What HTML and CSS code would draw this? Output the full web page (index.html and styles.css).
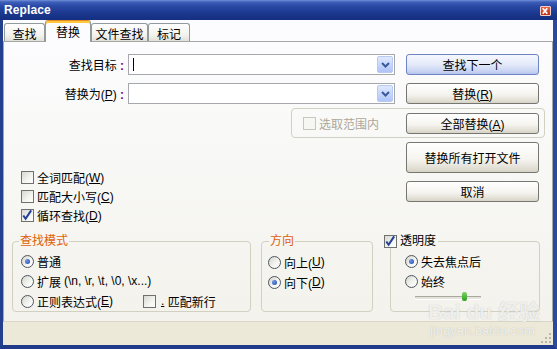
FILE: index.html
```html
<!DOCTYPE html>
<html lang="zh-CN">

<head>
    <meta charset="UTF-8">
    <title>Replace</title>
    <link rel="stylesheet" href="styles.css">
</head>

<body>

    <div class="window">
        <!-- Title bar -->
        <div class="titlebar">
            <span class="title">Replace</span>
            <span class="close-btn">
                <svg width="11" height="10" viewBox="0 0 11 10">
                    <path d="M3 2 L8 8 M8 2 L3 8" stroke="#fff" stroke-width="2" />
                </svg>
            </span>
        </div>

        <div class="frame">
            <!-- Tabs -->
            <div class="tabs">
                <div class="tab tab-find">查找</div>
                <div class="tab tab-replace active">替换</div>
                <div class="tab tab-files">文件查找</div>
                <div class="tab tab-mark">标记</div>
            </div>

            <div class="panel">
                <div class="field-row first">
                    <label class="field-label">查找目标 <span class="colon">:</span></label>
                    <div class="combo">
                        <span class="caret"></span>
                        <span class="combo-btn">
                            <svg width="9" height="6" viewBox="0 0 9 6">
                                <path d="M1 1 L4.5 4.5 L8 1" fill="none" stroke="#3b5a9a" stroke-width="2" />
                            </svg>
                        </span>
                    </div>
                    <button class="btn default">查找下一个</button>
                </div>

                <div class="field-row">
                    <label class="field-label">替换为(<u>P</u>) <span class="colon">:</span></label>
                    <div class="combo">
                        <span class="combo-btn">
                            <svg width="9" height="6" viewBox="0 0 9 6">
                                <path d="M1 1 L4.5 4.5 L8 1" fill="none" stroke="#3b5a9a" stroke-width="2" />
                            </svg>
                        </span>
                    </div>
                    <button class="btn">替换(<u>R</u>)</button>
                </div>

                <div class="selection-group">
                    <span class="option disabled"><span class="check"></span>选取范围内</span>
                    <button class="btn">全部替换(<u>A</u>)</button>
                </div>

                <div class="middle-row">
                    <div class="options">
                        <div class="option"><span class="check"></span>全词匹配(<u>W</u>)</div>
                        <div class="option"><span class="check"></span>匹配大小写(<u>C</u>)</div>
                        <div class="option"><span class="check checked">
                                <svg width="13" height="13" viewBox="0 0 13 13">
                                    <path d="M2.5 6.5 L5 10 L11 1" fill="none" stroke="#21409a" stroke-width="2.2" />
                                </svg>
                            </span>循环查找(<u>D</u>)</div>
                    </div>
                    <div class="actions">
                        <button class="btn tall">替换所有打开文件</button>
                        <button class="btn">取消</button>
                    </div>
                </div>

                <div class="groups">
                    <fieldset class="group group-mode">
                        <legend>查找模式</legend>
                        <div class="option"><span class="radio checked"></span>普通</div>
                        <div class="option"><span class="radio"></span>扩展 <span class="hint">(\n, \r, \t, \0, \x...)</span></div>
                        <div class="option">
                            <span class="regex"><span class="radio"></span>正则表达式(<u>E</u>)</span>
                            <span class="check"></span><u class="dot">.</u>&nbsp;匹配新行
                        </div>
                    </fieldset>

                    <fieldset class="group group-dir">
                        <legend>方向</legend>
                        <div class="option"><span class="radio"></span>向上(<u>U</u>)</div>
                        <div class="option"><span class="radio checked"></span>向下(<u>D</u>)</div>
                    </fieldset>

                    <fieldset class="group group-alpha">
                        <legend><span class="check checked">
                                <svg width="13" height="13" viewBox="0 0 13 13">
                                    <path d="M2.5 6.5 L5 10 L11 1" fill="none" stroke="#21409a" stroke-width="2.2" />
                                </svg>
                            </span>透明度</legend>
                        <div class="alpha-body">
                            <div class="option"><span class="radio checked"></span>失去焦点后</div>
                            <div class="option"><span class="radio"></span>始终</div>
                            <div class="slider">
                                <span class="thumb"></span>
                            </div>
                        </div>
                    </fieldset>
                </div>
            </div>

            <!-- Status bar with resize grip -->
            <div class="statusbar">
                <svg class="grip" width="10" height="10" viewBox="0 0 10 10">
                    <g fill="#b9b6a6">
                        <rect x="8" y="0" width="2" height="2" />
                        <rect x="4" y="4" width="2" height="2" />
                        <rect x="8" y="4" width="2" height="2" />
                        <rect x="0" y="8" width="2" height="2" />
                        <rect x="4" y="8" width="2" height="2" />
                        <rect x="8" y="8" width="2" height="2" />
                    </g>
                </svg>
            </div>
        </div>

        <div class="watermark">
            <span class="wm-logo">Bai du 经验</span>
            <span class="wm-url">jingyan.baidu.com</span>
        </div>
    </div>

</body>

</html>
```

FILE: styles.css
```css
/* Global Styles */
body {
    margin: 0;
    padding: 0;
    font-family: "Liberation Sans", "Noto Sans CJK SC", sans-serif;
    font-size: 12px;
    color: #000;
}

.window {
    position: relative;
    width: 557px;
    height: 349px;
    display: flex;
    flex-direction: column;
    background-color: #fcfcfe;
    overflow: hidden;
}

/* Title bar */
.titlebar {
    height: 20px;
    flex: none;
    display: flex;
    justify-content: space-between;
    align-items: center;
    padding: 0 6px 0 4px;
    background: linear-gradient(to bottom, #7290d8 0, #3f60ba 2px, #2a4aa5 6px, #1b388f 13px, #142f80 100%);
}

.title {
    color: white;
    font-weight: bold;
    font-size: 12px;
    letter-spacing: 0.1px;
}

.close-btn {
    display: flex;
    width: 11px;
    height: 10px;
    margin-top: 2px;
    background: linear-gradient(to bottom, #e8604a, #c42a14);
    border: 1px solid #f3d0c8;
    box-sizing: border-box;
    border-radius: 1px;
}

.close-btn svg {
    margin: -1px 0 0 -1px;
}

.frame {
    flex: 1;
    display: flex;
    flex-direction: column;
    border-left: 3px solid #22408e;
    border-right: 4px solid #2a4a9e;
    border-bottom: 4px solid #1f3b8a;
}

/* Tabs */
.tabs {
    height: 21px;
    flex: none;
    display: flex;
    align-items: flex-end;
    padding-left: 1px;
}

.tab {
    box-sizing: border-box;
    height: 18px;
    display: flex;
    justify-content: center;
    align-items: center;
    padding-top: 2px;
    border: 1px solid #919b9c;
    border-bottom: none;
    border-radius: 3px 3px 0 0;
    background: linear-gradient(to bottom, #ffffff, #f3f2ed 65%, #e2e0d6);
}

.tab-find { width: 41px; }
.tab-replace { width: 46px; }
.tab-files { width: 57px; }
.tab-mark { width: 42px; }

.tab.active {
    position: relative;
    z-index: 1;
    height: 22px;
    margin-bottom: -1px;
    padding-top: 0;
    background: #fcfcfe;
    border-top: 1px solid #e68b2c;
    box-shadow: inset 0 2px #ffc83c;
}

/* Tab panel */
.panel {
    flex: 1;
    border: 1px solid #a3a7a6;
    border-bottom-color: #d9d6c8;
    background: linear-gradient(to bottom, #fcfcfe, #f8f8f6 40%, #f3f2ec);
}

.field-row {
    display: flex;
    align-items: center;
    height: 21px;
    margin-top: 8px;
}

.field-row.first {
    margin-top: 12px;
}

.field-label {
    box-sizing: border-box;
    width: 124px;
    padding-right: 4px;
    text-align: right;
}

.colon {
    color: #800080;
    font-weight: bold;
}

.combo {
    box-sizing: border-box;
    width: 267px;
    height: 21px;
    display: flex;
    align-items: center;
    justify-content: space-between;
    background: white;
    border: 1px solid #a5a9ad;
    padding: 0 1px 0 4px;
}

.caret {
    width: 1px;
    height: 13px;
    background: black;
}

.combo-btn {
    box-sizing: border-box;
    width: 16px;
    height: 17px;
    margin-left: auto;
    display: flex;
    align-items: center;
    justify-content: center;
    border: 1px solid #b8c9f5;
    border-radius: 2px;
    background: linear-gradient(to bottom, #e0e9fd, #c3d4fb 60%, #afc5f6);
}

/* Buttons */
.btn {
    box-sizing: border-box;
    width: 133px;
    height: 21px;
    padding: 0;
    margin-left: 11px;
    font-family: inherit;
    font-size: 12px;
    color: black;
    border: 1px solid #777771;
    border-radius: 3px;
    background: linear-gradient(to bottom, #ffffff, #f5f4ef 55%, #e3e0d6 85%, #d6d2c5);
}

.btn.default {
    border-color: #6f84c2;
    background: linear-gradient(to bottom, #f6f8fe, #e4eaf9 50%, #c9d4f3 85%, #b5c4ee);
}

.btn.tall {
    height: 31px;
}

u {
    text-decoration: underline;
    text-underline-offset: 1px;
}

/* Checkboxes and radios */
.option {
    display: flex;
    align-items: center;
    height: 19px;
    white-space: nowrap;
}

.check {
    box-sizing: border-box;
    flex: none;
    width: 13px;
    height: 13px;
    margin-right: 3px;
    border: 1px solid #6f716f;
    background: linear-gradient(135deg, #d8d8d2, #f4f4f0 60%, #ffffff);
    display: inline-flex;
}

.check svg {
    margin: -1px 0 0 -1px;
}

.radio {
    box-sizing: border-box;
    flex: none;
    width: 13px;
    height: 13px;
    margin-right: 3px;
    border: 1px solid #4e5660;
    border-radius: 50%;
    background: linear-gradient(135deg, #d5d5cf, #f5f5f2 60%, #ffffff);
    display: inline-flex;
    align-items: center;
    justify-content: center;
}

.radio.checked::after {
    content: "";
    width: 5px;
    height: 5px;
    border-radius: 50%;
    background: radial-gradient(circle at 35% 35%, #6d95e8, #2348a8);
}

.option.disabled {
    color: #aca899;
}

.option.disabled .check {
    border-color: #c9c7ba;
    background: #f6f6f2;
}

.selection-group {
    box-sizing: border-box;
    width: 254px;
    height: 30px;
    margin: 4px 0 0 287px;
    padding: 0 5px 0 11px;
    display: flex;
    align-items: center;
    justify-content: space-between;
    border: 1px solid #d2d0c0;
    border-radius: 4px;
}

.middle-row {
    display: flex;
    margin-top: 4px;
}

.options {
    box-sizing: border-box;
    width: 402px;
    padding: 26px 0 0 17px;
}

.actions {
    display: flex;
    flex-direction: column;
    gap: 8px;
}

.actions .btn {
    margin-left: 0;
}

/* Group boxes */
.groups {
    display: flex;
    margin-top: 10px;
}

.group {
    margin: 0;
    padding: 0;
    min-width: 0;
    box-sizing: border-box;
    border: 1px solid #d2d0c0;
    border-radius: 4px;
}

.group legend {
    padding: 0 1px;
    line-height: 13px;
    color: #e0600b;
}

.group .option {
    height: 20px;
}

.group-mode {
    width: 239px;
    margin-left: 8px;
    padding: 3px 0 0 8px;
}

.group-mode legend {
    margin-left: -2px;
}

.hint {
    margin-left: 3px;
}

.regex {
    display: flex;
    align-items: center;
    width: 122px;
}

.dot {
    margin-left: 2px;
}

.group-dir {
    width: 112px;
    margin-left: 10px;
    padding: 4px 0 0 6px;
}

.group-dir legend {
    margin-left: 1px;
}

.group-alpha {
    width: 150px;
    margin-left: 17px;
}

.group-alpha legend {
    display: flex;
    align-items: center;
    margin-left: -7px;
    padding: 0 2px 0 0;
    color: black;
}

.alpha-body {
    padding: 3px 0 0 14px;
}

.slider {
    position: relative;
    width: 66px;
    height: 2px;
    margin: 5px 0 0 10px;
    border-top: 1px solid #a8a89e;
    border-bottom: 1px solid #ffffff;
    background: #e4e3dc;
}

.slider .thumb {
    position: absolute;
    left: 47px;
    top: -5px;
    width: 5px;
    height: 9px;
    border-radius: 2px;
    background: linear-gradient(to bottom, #7ed36b, #2f9e1f);
}

/* Status bar */
.statusbar {
    height: 23px;
    flex: none;
    display: flex;
    justify-content: flex-end;
    align-items: flex-end;
    padding: 0 2px 2px 0;
    box-sizing: border-box;
    background-color: #ece9d8;
}

/* Watermark over the lower right corner */
.watermark {
    position: absolute;
    left: 428px;
    top: 300px;
    display: flex;
    flex-direction: column;
    color: rgba(255, 255, 255, 0.75);
    text-shadow: 0 0 1px rgba(150, 150, 140, 0.6);
    pointer-events: none;
}

.wm-logo {
    font-size: 21px;
    font-weight: bold;
    line-height: 24px;
}

.wm-url {
    font-size: 13px;
    line-height: 14px;
    margin-left: 2px;
}
```
